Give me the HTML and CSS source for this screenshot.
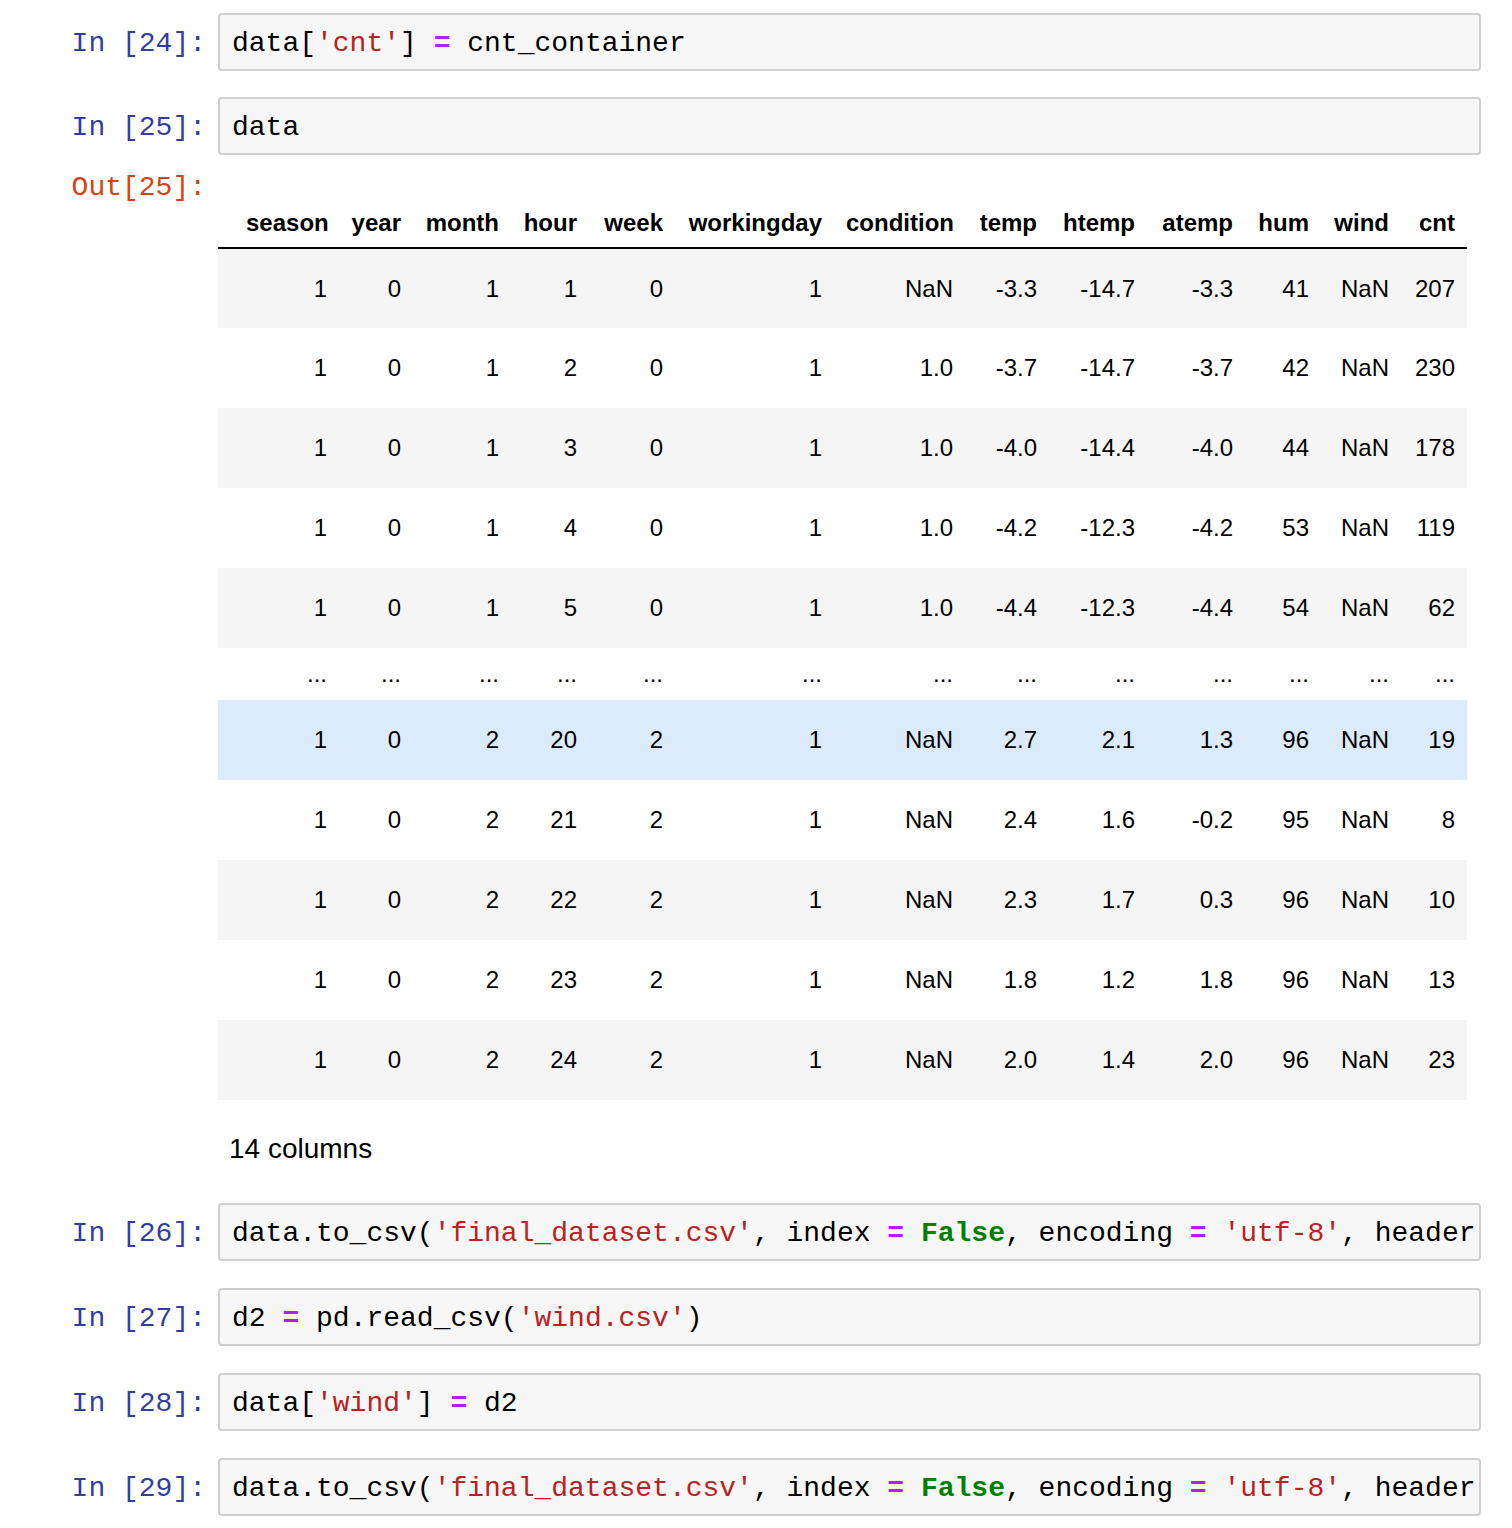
FILE: index.html
```html
<!DOCTYPE html>
<html>
<head>
<meta charset="utf-8">
<link rel="stylesheet" href="styles.css">
</head>
<body>
<div class="nb">
  <div class="group top">
    <div class="cell">
      <div class="prompt in">In [24]:</div>
      <div class="input"><pre class="code">data[<span class="s">'cnt'</span>] <span class="o">=</span> cnt_container</pre></div>
    </div>
    <div class="cell">
      <div class="prompt in">In [25]:</div>
      <div class="input"><pre class="code">data</pre></div>
    </div>
  </div>

  <div class="outcell">
    <div class="prompt outp">Out[25]:</div>
    <div class="output">
      <table class="df">
        <colgroup>
          <col class="w-idx"><col class="w-season"><col class="w-year"><col class="w-month"><col class="w-hour"><col class="w-week"><col class="w-wd"><col class="w-cond"><col class="w-temp"><col class="w-htemp"><col class="w-atemp"><col class="w-hum"><col class="w-wind"><col class="w-cnt">
        </colgroup>
        <thead>
          <tr><th></th><th>season</th><th>year</th><th>month</th><th>hour</th><th>week</th><th>workingday</th><th>condition</th><th>temp</th><th>htemp</th><th>atemp</th><th>hum</th><th>wind</th><th>cnt</th></tr>
        </thead>
        <tbody>
          <tr><td></td><td>1</td><td>0</td><td>1</td><td>1</td><td>0</td><td>1</td><td>NaN</td><td>-3.3</td><td>-14.7</td><td>-3.3</td><td>41</td><td>NaN</td><td>207</td></tr>
          <tr><td></td><td>1</td><td>0</td><td>1</td><td>2</td><td>0</td><td>1</td><td>1.0</td><td>-3.7</td><td>-14.7</td><td>-3.7</td><td>42</td><td>NaN</td><td>230</td></tr>
          <tr><td></td><td>1</td><td>0</td><td>1</td><td>3</td><td>0</td><td>1</td><td>1.0</td><td>-4.0</td><td>-14.4</td><td>-4.0</td><td>44</td><td>NaN</td><td>178</td></tr>
          <tr><td></td><td>1</td><td>0</td><td>1</td><td>4</td><td>0</td><td>1</td><td>1.0</td><td>-4.2</td><td>-12.3</td><td>-4.2</td><td>53</td><td>NaN</td><td>119</td></tr>
          <tr><td></td><td>1</td><td>0</td><td>1</td><td>5</td><td>0</td><td>1</td><td>1.0</td><td>-4.4</td><td>-12.3</td><td>-4.4</td><td>54</td><td>NaN</td><td>62</td></tr>
          <tr class="ell"><td></td><td>...</td><td>...</td><td>...</td><td>...</td><td>...</td><td>...</td><td>...</td><td>...</td><td>...</td><td>...</td><td>...</td><td>...</td><td>...</td></tr>
          <tr class="hover"><td></td><td>1</td><td>0</td><td>2</td><td>20</td><td>2</td><td>1</td><td>NaN</td><td>2.7</td><td>2.1</td><td>1.3</td><td>96</td><td>NaN</td><td>19</td></tr>
          <tr><td></td><td>1</td><td>0</td><td>2</td><td>21</td><td>2</td><td>1</td><td>NaN</td><td>2.4</td><td>1.6</td><td>-0.2</td><td>95</td><td>NaN</td><td>8</td></tr>
          <tr><td></td><td>1</td><td>0</td><td>2</td><td>22</td><td>2</td><td>1</td><td>NaN</td><td>2.3</td><td>1.7</td><td>0.3</td><td>96</td><td>NaN</td><td>10</td></tr>
          <tr><td></td><td>1</td><td>0</td><td>2</td><td>23</td><td>2</td><td>1</td><td>NaN</td><td>1.8</td><td>1.2</td><td>1.8</td><td>96</td><td>NaN</td><td>13</td></tr>
          <tr><td></td><td>1</td><td>0</td><td>2</td><td>24</td><td>2</td><td>1</td><td>NaN</td><td>2.0</td><td>1.4</td><td>2.0</td><td>96</td><td>NaN</td><td>23</td></tr>
        </tbody>
      </table>
      <p class="shape">14 columns</p>
    </div>
  </div>

  <div class="group bottom">
    <div class="cell">
      <div class="prompt in">In [26]:</div>
      <div class="input"><pre class="code">data.to_csv(<span class="s">'final_dataset.csv'</span>, index <span class="o">=</span> <span class="k">False</span>, encoding <span class="o">=</span> <span class="s">'utf-8'</span>, header</pre></div>
    </div>
    <div class="cell">
      <div class="prompt in">In [27]:</div>
      <div class="input"><pre class="code">d2 <span class="o">=</span> pd.read_csv(<span class="s">'wind.csv'</span>)</pre></div>
    </div>
    <div class="cell">
      <div class="prompt in">In [28]:</div>
      <div class="input"><pre class="code">data[<span class="s">'wind'</span>] <span class="o">=</span> d2</pre></div>
    </div>
    <div class="cell">
      <div class="prompt in">In [29]:</div>
      <div class="input"><pre class="code">data.to_csv(<span class="s">'final_dataset.csv'</span>, index <span class="o">=</span> <span class="k">False</span>, encoding <span class="o">=</span> <span class="s">'utf-8'</span>, header</pre></div>
    </div>
  </div>
</div>
</body>
</html>
```

FILE: styles.css
```css
* { box-sizing: border-box; }
html, body {
  margin: 0;
  padding: 0;
  background: #fff;
}
.nb {
  width: 1512px;
  padding-top: 13px;
  font-family: "Liberation Mono", "DejaVu Sans Mono", monospace;
}
.group {
  display: flex;
  flex-direction: column;
}
.group.top { gap: 26px; }
.group.bottom { gap: 27px; margin-top: 40px; }

.cell {
  display: flex;
  align-items: flex-start;
  height: 58px;
}
.prompt {
  flex: 0 0 218px;
  padding-right: 12px;
  text-align: right;
  font-size: 28px;
  line-height: 62px;
  white-space: pre;
}
.prompt.in { color: #303F9F; }
.input {
  flex: 0 0 1263px;
  height: 58px;
  background: #f7f7f7;
  border: 2px solid #cfcfcf;
  border-radius: 4px;
  padding: 0 12px;
  overflow: hidden;
}
.code {
  margin: 0;
  font-family: "Liberation Mono", "DejaVu Sans Mono", monospace;
  font-size: 28px;
  line-height: 58px;
  color: #000;
  white-space: pre;
}
.s { color: #BA2121; }
.o { color: #AA22FF; font-weight: bold; }
.k { color: #008000; font-weight: bold; }

.outcell {
  display: flex;
}
.prompt.outp {
  color: #D84315;
  line-height: 28px;
  padding-top: 19px;
}
.output {
  flex: 0 0 1249px;
  padding-top: 43px;
  font-family: "Liberation Sans", Arial, sans-serif;
}
.df {
  border-collapse: collapse;
  border-spacing: 0;
  table-layout: fixed;
  width: 1249px;
  font-size: 24px;
  color: #000;
}
.w-idx { width: 16px; }
.w-season { width: 105px; }
.w-year { width: 74px; }
.w-month { width: 98px; }
.w-hour { width: 78px; }
.w-week { width: 86px; }
.w-wd { width: 159px; }
.w-cond { width: 131px; }
.w-temp { width: 84px; }
.w-htemp { width: 98px; }
.w-atemp { width: 98px; }
.w-hum { width: 76px; }
.w-wind { width: 80px; }
.w-cnt { width: 66px; }

.df thead tr {
  border-bottom: 2px solid #000;
}
.df th {
  font-weight: bold;
  text-align: right;
  padding: 12px 12px;
  line-height: 24px;
  height: 50px;
  vertical-align: middle;
  white-space: nowrap;
}
.df td {
  text-align: right;
  padding: 0 12px;
  line-height: 24px;
  height: 80px;
  vertical-align: middle;
  white-space: nowrap;
}
.df th:first-child, .df td:first-child { padding: 0; }
.df tbody tr:nth-child(odd) { background: #f5f5f5; }
.df tbody tr.ell td { height: 52px; }
.df tbody tr.hover { background: #dbebfb; }

.shape {
  margin: 35px 0 0;
  padding-left: 11px;
  font-family: "Liberation Sans", Arial, sans-serif;
  font-size: 28px;
  line-height: 28px;
  color: #000;
}
```
